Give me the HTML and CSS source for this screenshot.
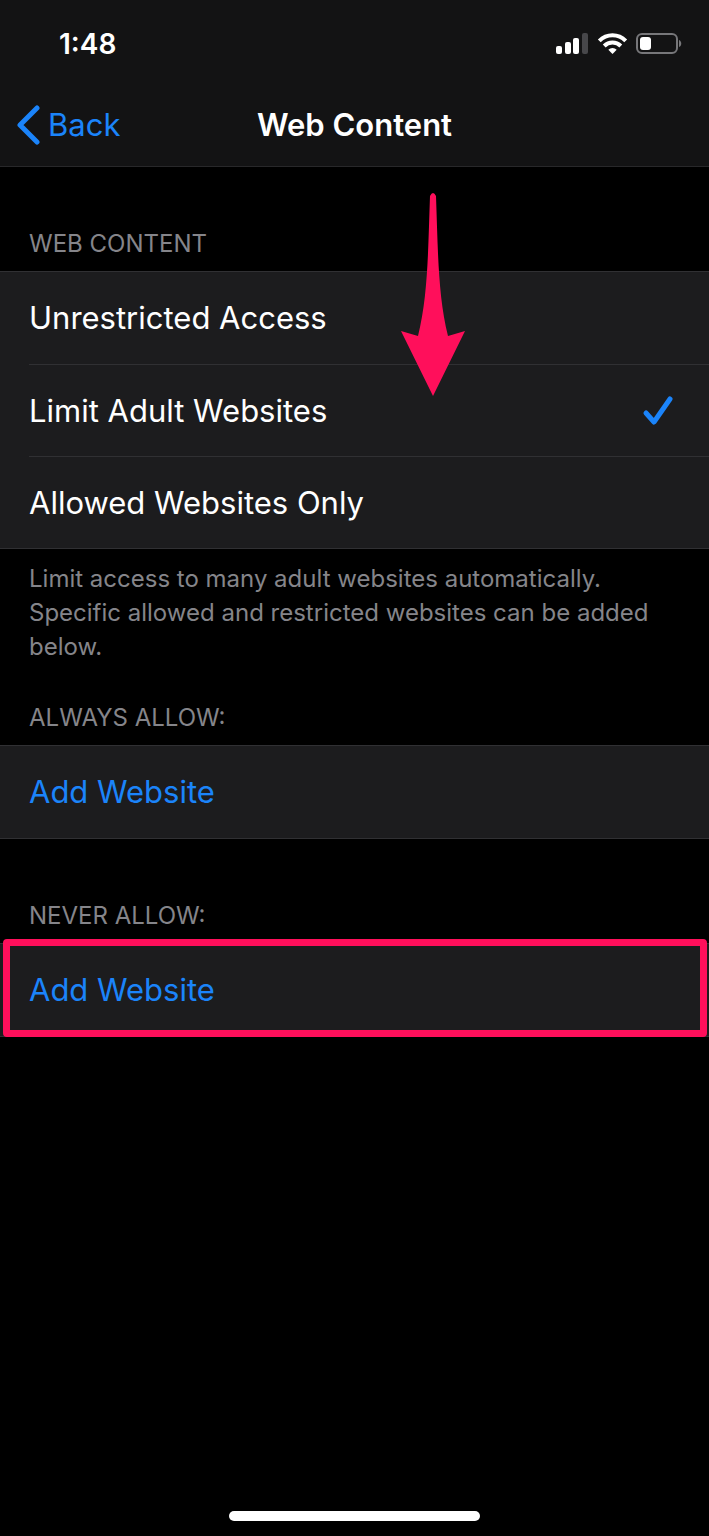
FILE: index.html
```html
<!DOCTYPE html>
<html lang="en">
<head>
    <meta charset="UTF-8">
    <meta name="viewport" content="width=device-width, initial-scale=1">
    <title>Web Content</title>
    <link rel="stylesheet" href="styles.css">
</head>
<body>
<header class="top">
    <div class="status">
        <span class="time">1:48</span>
        <svg class="status-icons" width="128" height="24" viewBox="0 0 128 24" aria-hidden="true">
            <!-- signal -->
            <g fill="#fff">
                <rect x="1" y="14" width="6" height="8" rx="2"/>
                <rect x="10" y="10" width="6" height="12" rx="2"/>
                <rect x="18" y="6" width="6" height="16" rx="2"/>
                <rect x="27" y="1" width="6" height="21" rx="2" fill="#47474a"/>
            </g>
            <!-- wifi -->
            <g fill="none" stroke="#fff" stroke-width="4">
                <path d="M44.3 8.8a18.6 18.6 0 0 1 26.4 0"/>
                <path d="M49.2 14a11.8 11.8 0 0 1 16.6 0"/>
            </g>
            <path d="M53.3 17.8a6 6 0 0 1 8.4 0L57.5 22z" fill="#fff"/>
            <!-- battery -->
            <rect x="82" y="2" width="40" height="19" rx="5" fill="none" stroke="#77777a" stroke-width="2"/>
            <rect x="85" y="5" width="11" height="13" rx="3" fill="#fff"/>
            <path d="M124 8c3 1 3 6 0 7z" fill="#77777a"/>
        </svg>
    </div>
    <nav class="navbar">
        <a class="back" href="#">
            <svg width="24" height="40" viewBox="0 0 24 40" aria-hidden="true">
                <path d="M21 3L4 20l17 17" fill="none" stroke="currentColor" stroke-width="5" stroke-linecap="round" stroke-linejoin="round"/>
            </svg>
            <span>Back</span>
        </a>
        <h1>Web Content</h1>
    </nav>
</header>

<main>
    <section class="block">
        <h2 id="content-title">WEB CONTENT</h2>
        <div class="group" role="radiogroup" aria-labelledby="content-title">
            <label class="row">
                <span>Unrestricted Access</span>
                <input type="radio" name="access">
            </label>
            <label class="row">
                <span>Limit Adult Websites</span>
                <input type="radio" name="access" checked>
                <svg class="check" width="32" height="32" viewBox="0 0 32 32" aria-hidden="true">
                    <path d="M4 18l8 9L28 4" fill="none" stroke="currentColor" stroke-width="5" stroke-linecap="round" stroke-linejoin="round"/>
                </svg>
            </label>
            <label class="row">
                <span>Allowed Websites Only</span>
                <input type="radio" name="access">
            </label>
            <svg class="arrow" width="66" height="204" viewBox="0 0 66 204" aria-hidden="true">
                <path d="M30 4Q33-2 36 4C38 60 38 104 48 144L65 139L33 204L1 139L18 144C28 104 28 60 30 4z" fill="#ff0f5b"/>
            </svg>
        </div>
        <p class="note">Limit access to many adult websites automatically. Specific allowed and restricted websites can be added below.</p>
    </section>

    <section class="block">
        <h2>ALWAYS ALLOW:</h2>
        <div class="group">
            <button class="row add" type="button">Add Website</button>
        </div>
    </section>

    <section class="block">
        <h2>NEVER ALLOW:</h2>
        <div class="group marked">
            <button class="row add" type="button">Add Website</button>
        </div>
    </section>
</main>

<footer class="home">
    <div class="home-bar"></div>
</footer>
</body>
</html>
```
FILE: styles.css
```css
* {
    margin: 0;
    padding: 0;
    box-sizing: border-box;
}

body {
    display: flex;
    flex-direction: column;
    min-height: 100vh;
    background: #000;
    color: #fff;
    font-family: Inter, "Liberation Sans", sans-serif;
    font-size: 31px;
    line-height: 40px;
}

main {
    flex: 1;
}

/* top bar */
.top {
    background: #131314;
    border-bottom: 1px solid #28282a;
}

.status {
    display: flex;
    align-items: center;
    justify-content: space-between;
    padding: 24px 26px 20px 59px;
}

.time {
    font-size: 28px;
    font-weight: 600;
}

.navbar {
    display: grid;
    grid-template-columns: 1fr auto 1fr;
    align-items: center;
    padding: 21px 16px;
}

.navbar h1 {
    font-size: 31px;
    font-weight: 600;
}

.back {
    display: flex;
    align-items: center;
    gap: 8px;
    color: #1b84fa;
    text-decoration: none;
}

/* lists */
.block {
    padding-top: 39px;
}

.block:first-child,
.block:last-child {
    padding-top: 62px;
}

.block h2 {
    padding: 0 29px 12px;
    color: #85858a;
    font-size: 24px;
    font-weight: 400;
    line-height: 30px;
}

.group {
    position: relative;
    background: #1c1c1e;
    border-top: 1px solid #303033;
    border-bottom: 1px solid #303033;
}

.row {
    display: flex;
    align-items: center;
    justify-content: space-between;
    min-height: 92px;
    margin-left: 29px;
    padding-right: 35px;
}

.row + .row {
    border-top: 1px solid #303033;
}

.row input {
    appearance: none;
    width: 0;
    height: 0;
}

.check {
    color: #1b84fa;
}

.add {
    width: calc(100% - 29px);
    border: 0;
    background: none;
    color: #1b84fa;
    font: inherit;
    text-align: left;
}

.note {
    padding: 13px 29px 0;
    color: #85858a;
    font-size: 24px;
    line-height: 34px;
}

/* highlights */
.arrow {
    position: absolute;
    top: -80px;
    left: 400px;
}

.marked::after {
    content: "";
    position: absolute;
    top: -5px;
    right: 2px;
    bottom: -1px;
    left: 3px;
    border: 7px solid #ff0f5b;
    border-radius: 4px;
    pointer-events: none;
}

.home {
    display: flex;
    justify-content: center;
    padding: 15px;
}

.home-bar {
    width: 37%;
    height: 10px;
    border-radius: 5px;
    background: #fff;
}
```
